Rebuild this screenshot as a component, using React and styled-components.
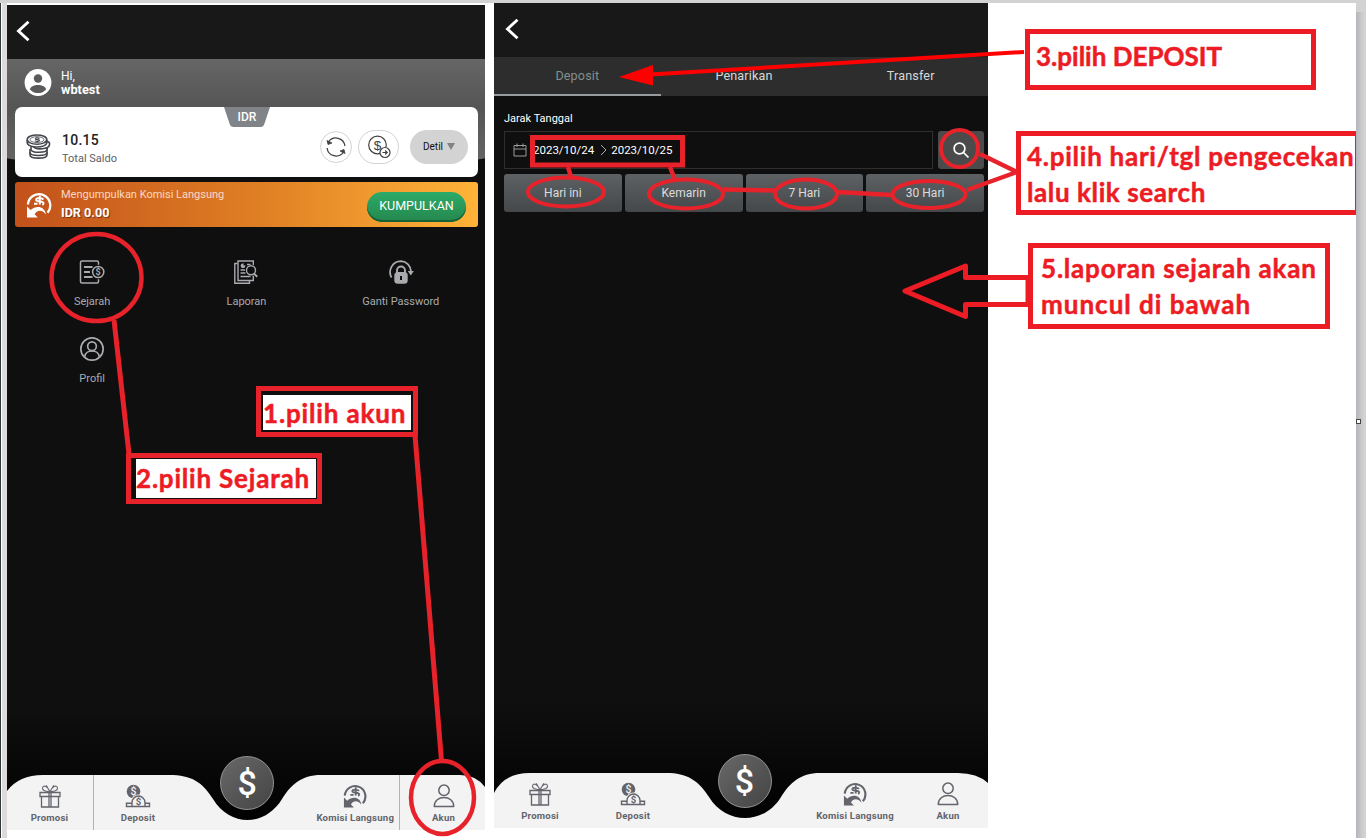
import React from "react";
import styled, { createGlobalStyle } from "styled-components";

const RED = "#ed1c24";

const Global = createGlobalStyle`
  * { box-sizing: border-box; }
  html, body { margin: 0; padding: 0; background: #fff; }
  body { font-family: Roboto, "Liberation Sans", sans-serif; overflow: hidden; }
`;

const Page = styled.main`
  position: relative;
  width: 1366px;
  height: 838px;
  display: flex;
  align-items: flex-start;
  background: #fff;
  border-top: 3px solid #d2d2d2;
  overflow: hidden;
`;
const LeftEdge = styled.div`
  width: 7px;
  height: 100%;
  flex: none;
  background: #dedadb;
  border-left: 1px solid #33383d;
  box-shadow: inset 1px 0 0 #fff;
`;
const Phone = styled.section`
  position: relative;
  flex: none;
  display: flex;
  flex-direction: column;
  width: ${(p) => p.$w}px;
  height: 825px;
  margin-top: ${(p) => p.$top}px;
  margin-left: ${(p) => p.$left || 0}px;
  background: linear-gradient(#0f0f0f 0 85%, #000 100%);
  overflow: hidden;
`;
const Header = styled.header`
  height: 54px;
  flex: none;
  display: flex;
  align-items: center;
  padding: 0 0 2px ${(p) => p.$pl}px;
  background: #181818;
`;
const Hero = styled.div`
  position: relative;
  height: 123px;
  padding: 0 7px 0 8px;
  isolation: isolate;
  &::before {
    content: "";
    position: absolute;
    z-index: -1;
    inset: 0 -2px 16px -2px;
    background: linear-gradient(#666, #555 45%, #666);
    border-radius: 0 0 50% 50% / 0 0 9px 9px;
  }
`;
const User = styled.div`
  height: 48px;
  display: flex;
  align-items: center;
  gap: 9px;
  padding-left: 9px;
  color: #fff;
  font-size: 12px;
  line-height: 13.5px;
  b { display: block; font-weight: 700; font-size: 12.8px; }
`;
const Balance = styled.div`
  position: relative;
  height: 70px;
  display: flex;
  align-items: center;
  padding: 9px 10px 0 11px;
  border-radius: 7px;
  background: #fff;
`;
const Currency = styled.span`
  position: absolute;
  left: 209px;
  top: 0;
  width: 46px;
  height: 20px;
  text-align: center;
  font-size: 12px;
  line-height: 20px;
  font-weight: 500;
  color: #fff;
  isolation: isolate;
  svg { position: absolute; inset: 0; z-index: -1; }
`;
const Amount = styled.div`
  flex: 1;
  margin-left: 11px;
  padding-top: 5px;
  font-size: 11px;
  line-height: 17px;
  color: #5c6065;
  b { display: block; font-size: 14px; line-height: 19px; font-weight: 500; color: #222; letter-spacing: 0.25px; }
`;
const RoundButton = styled.button`
  display: grid;
  place-items: center;
  width: ${(p) => p.$w}px;
  height: ${(p) => p.$h}px;
  margin-left: ${(p) => p.$ml}px;
  padding: 0;
  border: 1px solid #d3d3d3;
  border-radius: 20px;
  background: #fff;
`;
const DetailButton = styled.button`
  display: flex;
  align-items: center;
  justify-content: center;
  gap: 4px;
  width: 58px;
  height: 34px;
  margin-left: 11px;
  padding: 0;
  border: 0;
  border-radius: 17px;
  background: #d3d3d3;
  color: #111;
  font: 10px Roboto, sans-serif;
`;
const Commission = styled.div`
  display: flex;
  align-items: center;
  height: 45px;
  margin: 0 7px 0 8px;
  padding: 0 12px 0 11px;
  border-radius: 3px;
  background: linear-gradient(90deg, #c2511b, #df7e24 52%, #ffb338);
  color: #fff;
`;
const CommissionText = styled.div`
  flex: 1;
  margin-left: 9px;
  font-size: 11px;
  line-height: 16px;
  color: #fbd9c4;
  b { display: block; font-size: 12.6px; line-height: 20px; color: #fff; text-shadow: 1px 1px 1px rgba(60, 20, 0, 0.6); }
`;
const Collect = styled.button`
  width: 99px;
  height: 30px;
  margin-top: 4px;
  padding: 0 0 3px;
  border: 0;
  border-radius: 15px;
  background: linear-gradient(#2cab68, #25874e);
  box-shadow: inset 0 -2px 0 #146336;
  color: #fff;
  font: 12.5px Roboto, sans-serif;
`;
const Menu = styled.div`
  display: grid;
  grid-template-columns: repeat(3, 154.3px);
  grid-auto-rows: 77px;
  margin: 33px 7px 0 8px;
`;
const MenuItem = styled.div`
  display: flex;
  flex-direction: column;
  align-items: center;
  gap: 11px;
  color: #a9abaf;
  font-size: 11px;
  line-height: 14px;
`;

const Tabs = styled.nav`
  display: grid;
  grid-template-columns: repeat(3, 166.7px);
  height: 39px;
  background: #2d2d2d;
`;
const Tab = styled.div`
  display: flex;
  align-items: center;
  justify-content: center;
  border-bottom: 2px solid ${(p) => (p.$active ? "#989b9e" : "transparent")};
  color: ${(p) => (p.$active ? "#82908d" : "#d8d8d8")};
  font-size: 12.6px;
  letter-spacing: 0.15px;
`;
const Filters = styled.div`
  padding: 15px 4px 0 10px;
`;
const FieldLabel = styled.div`
  color: #fff;
  font-size: 11px;
  line-height: 15px;
  margin-bottom: 5px;
`;
const FilterRow = styled.div`
  display: flex;
  gap: 5px;
  margin-bottom: 5px;
`;
const DateField = styled.div`
  display: flex;
  align-items: center;
  width: 429px;
  height: 38px;
  padding-left: 8px;
  border: 1px solid #2f2f2f;
  color: #fff;
  font-size: 11.5px;
  svg { flex: none; }
`;
const DateText = styled.span`
  margin-left: ${(p) => p.$ml}px;
`;
const Chevron = styled.svg`
  margin-left: 6px;
`;
const SearchButton = styled.button`
  display: grid;
  place-items: center;
  width: 46px;
  height: 38px;
  padding: 0;
  border: 0;
  border-radius: 3px;
  background: #4b4b4b;
`;
const Ranges = styled.div`
  display: grid;
  grid-template-columns: repeat(4, 1fr);
  gap: 3px;
`;
const Range = styled.button`
  height: 38px;
  padding: 0 0 1px;
  border: 0;
  border-radius: 3px;
  background: linear-gradient(#5e6164, #45484a);
  color: #dcdcdc;
  font: 12px Roboto, sans-serif;
`;

const NavBar = styled.nav`
  position: absolute;
  left: 0;
  bottom: 0;
  width: 100%;
  height: 75px;
  > svg { position: absolute; left: 0; bottom: 0; }
`;
const NavGrid = styled.div`
  position: relative;
  display: grid;
  grid-template-columns: ${(p) => p.$cols};
  margin-left: ${(p) => p.$shift}px;
  padding-top: 20px;
`;
const NavItem = styled.div`
  display: flex;
  flex-direction: column;
  align-items: center;
  gap: 3px;
  height: 55px;
  padding-top: 9px;
  border-left: ${(p) => (p.$bl ? "1px solid #b3b3b5" : "0")};
  border-right: ${(p) => (p.$br ? "1px solid #b3b3b5" : "0")};
  color: #63646c;
  font-size: 9.6px;
  font-weight: 700;
  line-height: 14px;
  letter-spacing: 0.22px;
  white-space: nowrap;
`;
const Coin = styled.div`
  justify-self: center;
  width: 54px;
  height: 54px;
  margin: -19px 0 20px 1px;
  display: grid;
  place-items: center;
  border: 1.5px solid #949494;
  border-radius: 50%;
  background: linear-gradient(135deg, #686868, #444);
  color: #fff;
  font-size: 34px;
  font-weight: 500;
  line-height: 51px;
`;

const Notes = styled.aside`
  display: flex;
  flex-direction: column;
  width: 368px;
  flex: none;
  padding-top: 26px;
`;
const Note = styled.div`
  width: ${(p) => p.$w}px;
  height: ${(p) => p.$h}px;
  margin: ${(p) => p.$m};
  padding: ${(p) => p.$pad};
  border: 5px solid ${RED};
  ${(p) => p.$thinRight && "border-right-width: 2px;"}
  background: #fff;
  color: ${RED};
  font: 700 26px/36px Lato, sans-serif;
  -webkit-text-stroke: 0.5px ${RED};
  white-space: nowrap;
`;
const NoteLine = styled.div`
  letter-spacing: ${(p) => p.$ls || 0}px;
`;
const Gutter = styled.div`
  position: absolute;
  right: 0;
  top: 0;
  width: 10px;
  height: 100%;
  background: #d2d2d2;
  &::before {
    content: "";
    position: absolute;
    inset: 9px 2px 0 0;
    background: linear-gradient(90deg, #b3b6bc, #d2d2d2);
  }
`;
const Handle = styled.div`
  position: absolute;
  left: 1356px;
  top: 416px;
  width: 5px;
  height: 5px;
  border: 1px solid #444;
  background: #fff;
`;
const Marks = styled.svg`
  position: absolute;
  left: 0;
  top: -3px;
`;
const Callout = styled.div`
  position: absolute;
  left: ${(p) => p.$x}px;
  top: ${(p) => p.$y - 3}px;
  width: ${(p) => p.$w}px;
  height: ${(p) => p.$h}px;
  padding: ${(p) => p.$pad};
  border: 5px solid #e8222a;
  background: #0f0f0f;
  color: ${RED};
  font: 700 26px/36px Lato, sans-serif;
  -webkit-text-stroke: 0.5px ${RED};
  white-space: nowrap;
  > div { height: 100%; padding-bottom: ${(p) => p.$lift || 0}px; display: flex; align-items: center; background: #fff; letter-spacing: ${(p) => p.$ls}px; }
`;

const Back = () => (
  <svg width="16" height="22" viewBox="0 0 16 22" fill="none" stroke="#fff" strokeWidth="2.9">
    <path d="M13.5 1.8 3.5 11l10 9.2" />
  </svg>
);
const Avatar = () => (
  <svg width="28" height="28" viewBox="0 0 28 28">
    <circle cx="14" cy="13.500" r="13.400" fill="#fff" />
    <circle cx="14" cy="9.500" r="4.200" fill="#5b5b5b" />
    <path d="M5.800 20.200c1-3.100 5-4.200 8.200-4.200s7.200 1.100 8.200 4.200C20 22.800 17 24.100 14 24.100S8 22.800 5.800 20.200z" fill="#5b5b5b" />
  </svg>
);
const Coins = () => (
  <svg width="25" height="26" viewBox="0 0 25 26" fill="#fff" stroke="#44474c" strokeWidth="1.600">
    <path d="M4 18v3c0 4.200 17 4.200 17 0v-3" />
    <path d="M4 15v3.500c0 4 17 4 17 0V14" />
    <path d="M5 11v4.500c0 4 16 3.500 16 0V13" />
    <path d="M7 12c2 4.500 16.500 3.500 16.500-1.500V9c-1-3-16-3-16.500 1z" />
    <path d="M1.200 6v2.500c0 6 19.600 6 19.600 0V6" />
    <ellipse cx="11" cy="5.600" rx="9.800" ry="4.600" />
    <ellipse cx="11" cy="5.600" rx="7" ry="2.900" strokeWidth=".8" />
    <path d="M13.500 4.500c-1.500-1-4.500-.7-4 .4.500 1 4 .5 4 1.700 0 1-3.500 1.200-4.500.1" strokeWidth="1.200" fill="none" />
  </svg>
);
const Refresh = () => (
  <svg width="20" height="20" viewBox="0 0 20 20" fill="none" stroke="#44403d" strokeWidth="1.300">
    <path d="M2.500 5A9 9 0 0 1 18.900 9M17.500 15A9 9 0 0 1 1.100 11" />
    <path d="M1 3.500 2 7.500 6 6zM19 16.500l-1-4-4 1.500z" fill="#44403d" stroke="#44403d" strokeWidth=".8" />
  </svg>
);
const Send = () => (
  <svg width="24" height="24" viewBox="0 0 24 24" fill="none" stroke="#44403d" strokeWidth="1.200">
    <circle cx="10.500" cy="10" r="8.800" />
    <text x="10.500" y="14.800" textAnchor="middle" fontSize="13.500" fill="#44403d" stroke="none">$</text>
    <circle cx="18" cy="17.500" r="5" fill="#fff" />
    <path d="M15.500 17.500h4.500m-1.800-2 2 2-2 2" />
  </svg>
);
const Cashback = ({ size = 26, color = "#fff" }) => (
  <svg width={size} height={size} viewBox="0 0 26 26" fill="none" stroke={color} strokeWidth="2.300">
    <path d="M1.900 12.500A11.200 11.200 0 1 1 21.500 20.800" />
    <path d="M1 14.500V25.500H11.800L8.600 22.200C11 18.300 15.500 17 20 22.500C18.800 14.300 10.500 12.800 4.600 18.100Z" fill={color} stroke="none" />
    <path d="M17.300 7.600c-1.300-2-7-2.200-7.200.2-.2 2.500 7.400.8 7.400 3.400 0 .8-.5 1.300-1.200 1.600M8 11.800h3.500M13.800 3.600V12.500" strokeWidth="2" />
  </svg>
);
const History = () => (
  <svg width="26" height="24" viewBox="0 0 26 24" fill="none" stroke="currentColor" strokeWidth="1.500">
    <path d="M19.500 4.800V2.500Q19.500 1 18 1H3Q1.500 1 1.500 2.500v19Q1.500 23 3 23h15q1.500 0 1.500-1.500v-2.300" />
    <path d="M5 7h8.500M5 12h6M5 17h8.500" strokeWidth="1.800" />
    <circle cx="19.200" cy="12" r="5.600" />
    <text x="19.200" y="15.300" textAnchor="middle" fontSize="9" fontWeight="700" fill="currentColor" stroke="none">$</text>
  </svg>
);
const Report = () => (
  <svg width="24" height="24" viewBox="0 0 24 24" fill="none" stroke="currentColor" strokeWidth="1.400">
    <path d="M19.300 5V1H4v19.500h15.300v-4.800" />
    <path d="M3.500 3.500H.8V23.200H15.500v-2.500" />
    <circle cx="9" cy="5.800" r="2.400" fill="currentColor" stroke="none" />
    <path d="M9.600 5.200 12 3" stroke="#0f0f0f" />
    <path d="M6.500 10h4.500M6.500 13h5M6.500 16.500h10M13 4.500h3.500" />
    <circle cx="17" cy="10.300" r="4.500" />
    <path d="m20.200 13.800 3 3" strokeWidth="2" />
  </svg>
);
const Password = () => (
  <svg width="26" height="24" viewBox="0 0 26 24" fill="none" stroke="currentColor" strokeWidth="1.800">
    <path d="M3.500 17.500A11 11 0 0 1 13 1.200A10.500 10.500 0 0 1 23 11.500" />
    <path d="M19.800 11h6l-3 4.500z" fill="currentColor" stroke="none" />
    <path d="M9 13V10.500a4 4 0 0 1 8 0V13" strokeWidth="1.900" />
    <rect x="6.300" y="12" width="13.400" height="11.800" rx="3.500" fill="currentColor" stroke="none" />
    <path d="M13 16v4" stroke="#0f0f0f" strokeWidth="2" />
  </svg>
);
const Profile = () => (
  <svg width="26" height="24" viewBox="0 0 26 26" fill="none" stroke="currentColor" strokeWidth="1.800">
    <circle cx="13" cy="13" r="12.100" />
    <circle cx="13" cy="10" r="4.700" />
    <path d="M5 21.500c1-8.500 15-8.500 16 0" />
  </svg>
);
const Gift = () => (
  <svg width="24" height="24" viewBox="0 0 24 24" fill="none" stroke="currentColor" strokeWidth="1.300">
    <path d="M2 8.500h20v4H2zM3.500 12.500V23h17V12.500M11 8.500V23M13 8.500V23" />
    <path d="M12 8C9 1 5 1 4.500 4S9 7.500 12 8c3-7 7-7 7.500-4S15 7.500 12 8zM12 8C9 3 9 1.500 8 1.500M12 8c3-5 3-6.500 4-6.500" strokeWidth="1.100" />
  </svg>
);
const DepositIcon = () => (
  <svg width="26" height="24" viewBox="0 0 26 24" fill="none" stroke="currentColor" strokeWidth="1.400">
    <circle cx="8.500" cy="7.500" r="6.800" fill="currentColor" stroke="none" />
    <text x="8.500" y="11.200" textAnchor="middle" fontSize="10.500" fontWeight="500" fill="#f3f3f3" stroke="none">$</text>
    <path d="M7 22.500v-4a6.500 6.500 0 0 1 13 0v4z" fill="#f3f3f3" stroke="#f3f3f3" strokeWidth="3" />
    <path d="M7 19.200H1.500v3.300h23v-3.300H20" />
    <path d="M7 22.500v-4a6.500 6.500 0 0 1 13 0v4" />
    <text x="13.500" y="21" textAnchor="middle" fontSize="9.500" fill="currentColor" stroke="none">$</text>
  </svg>
);
const Account = () => (
  <svg width="22" height="24" viewBox="0 0 22 24" fill="none" stroke="currentColor" strokeWidth="1.500">
    <circle cx="11" cy="6.300" r="5.200" />
    <path d="M1.300 22.500c-.3-12 19.700-12 19.400 0z" strokeLinejoin="round" />
  </svg>
);
const Calendar = () => (
  <svg width="14" height="14" viewBox="0 0 14 14" fill="none" stroke="#9b9b9b" strokeWidth="1">
    <path d="M1 2.500h12v10.500H1zM1 6h12M4 .5v3.500M10 .5v3.500" />
  </svg>
);
const Search = () => (
  <svg width="18" height="18" viewBox="0 0 18 18" fill="none" stroke="#fff" strokeWidth="1.700">
    <circle cx="7.500" cy="7.500" r="5.400" />
    <path d="m11.500 11.500 5 5" />
  </svg>
);

function BottomNav({ shape, width, cols, shift, dividers }) {
  return (
    <NavBar>
      <svg width={width} height="75" viewBox={`0 0 ${width} 75`}>
        <path d={shape} fill="#f3f3f3" />
      </svg>
      <NavGrid $cols={cols} $shift={shift}>
        <NavItem $br={dividers}><Gift />Promosi</NavItem>
        <NavItem><DepositIcon />Deposit</NavItem>
        <Coin>$</Coin>
        <NavItem><Cashback size={24} color="#63646c" />Komisi Langsung</NavItem>
        <NavItem $bl={dividers}><Account />Akun</NavItem>
      </NavGrid>
    </NavBar>
  );
}

export default function App() {
  return (
    <>
      <Global />
      <Page>
        <LeftEdge />
        <Phone $w={478} $top={2}>
          <Header $pl={8}><Back /></Header>
          <Hero>
            <User>
              <Avatar />
              <div>Hi,<b>wbtest</b></div>
            </User>
            <Balance>
              <Currency>
                <svg width="46" height="20"><path d="M0 0h46l-5.500 16.500q-1 3.500-4 3.500H9.500q-3 0-4-3.500z" fill="#808489" /></svg>
                IDR
              </Currency>
              <Coins />
              <Amount><b>10.15</b>Total Saldo</Amount>
              <RoundButton $w={32} $h={32} $ml={0}><Refresh /></RoundButton>
              <RoundButton $w={41} $h={34} $ml={6}><Send /></RoundButton>
              <DetailButton>
                Detil
                <svg width="8" height="7"><path d="M0 0h8L4 7z" fill="#828282" /></svg>
              </DetailButton>
            </Balance>
          </Hero>
          <Commission>
            <Cashback />
            <CommissionText>Mengumpulkan Komisi Langsung<b>IDR 0.00</b></CommissionText>
            <Collect>KUMPULKAN</Collect>
          </Commission>
          <Menu>
            <MenuItem><History />Sejarah</MenuItem>
            <MenuItem><Report />Laporan</MenuItem>
            <MenuItem><Password />Ganti Password</MenuItem>
            <MenuItem><Profile />Profil</MenuItem>
          </Menu>
          <BottomNav
            width={478}
            shape="M0 36Q12 20 36 20H166C188 21 197 30 206 44C223 72 258 72 275 44C284 30 294 20 314 20H453Q469 20 478 32V75H0Z"
            cols="88px 88px 129.500px 87.500px 88px"
            shift={-1}
            dividers
          />
        </Phone>
        <Phone $w={494} $top={0} $left={9}>
          <Header $pl={10}><Back /></Header>
          <Tabs>
            <Tab $active>Deposit</Tab>
            <Tab>Penarikan</Tab>
            <Tab>Transfer</Tab>
          </Tabs>
          <Filters>
            <FieldLabel>Jarak Tanggal</FieldLabel>
            <FilterRow>
              <DateField>
                <Calendar />
                <DateText $ml={6}>2023/10/24</DateText>
                <Chevron width="7" height="12" fill="none" stroke="#aaa"><path d="m1 1 5 5-5 5" /></Chevron>
                <DateText $ml={4}>2023/10/25</DateText>
              </DateField>
              <SearchButton><Search /></SearchButton>
            </FilterRow>
            <Ranges>
              <Range>Hari ini</Range>
              <Range>Kemarin</Range>
              <Range>7 Hari</Range>
              <Range>30 Hari</Range>
            </Ranges>
          </Filters>
          <BottomNav
            width={494}
            shape="M0 40Q10 20 36 20H176C196 21 206 30 215 44C232 72 270 72 287 44C296 30 306 20 326 20H464Q483 20 494 30V75H0Z"
            cols="93px 93px 129px 93px 93px"
            shift={-0.5}
          />
        </Phone>
        <Notes>
          <Note $w={291} $h={61} $m="0 0 0 37px" $pad="4px 6px"><NoteLine>3.pilih DEPOSIT</NoteLine></Note>
          <Note $w={341} $h={84} $m="41px 0 0 28px" $pad="2px 6px" $thinRight>
            <NoteLine $ls={0.74}>4.pilih hari/tgl pengecekan</NoteLine>
            <NoteLine $ls={0.6}>lalu klik search</NoteLine>
          </Note>
          <Note $w={302} $h={86} $m="28px 0 0 40px" $pad="2px 8px">
            <NoteLine $ls={0.8}>5.laporan sejarah akan</NoteLine>
            <NoteLine $ls={1.0}>muncul di bawah</NoteLine>
          </Note>
        </Notes>
        <Gutter />
        <Handle />
        <Callout $x={256} $y={386} $w={162} $h={51} $pad="4px 2px 2px 2px" $ls={0.85}><div>1.pilih akun</div></Callout>
        <Callout $x={126} $y={453} $w={196} $h={51} $pad="1px 1px 1px 5px" $ls={0.8} $lift={2}><div>2.pilih Sejarah</div></Callout>
        <Marks width="1366" height="838" fill="none" stroke="#e8222a" strokeWidth="5">
          <ellipse cx="96.500" cy="277.500" rx="45" ry="43.500" strokeWidth="4.500" />
          <path d="M114 320 129 454M415 435 441.500 761" />
          <ellipse cx="442.500" cy="797.500" rx="31.500" ry="36.500" strokeWidth="4.500" />
          <rect x="532.500" y="137.500" width="150" height="27.500" />
          <path d="M568 167 571 177M670 167 675 180M723 189.500 776 190.500M837 192 892 195M980 154 1017 172 967 190" strokeWidth="4.500" strokeLinejoin="bevel" />
          <g strokeWidth="4">
            <ellipse cx="566" cy="192" rx="38" ry="14.500" />
            <ellipse cx="686" cy="194" rx="37" ry="14.500" />
            <ellipse cx="806" cy="194" rx="31" ry="14.500" />
            <ellipse cx="929" cy="194.500" rx="36.500" ry="13.500" />
            <circle cx="959.500" cy="148.500" r="18.500" />
          </g>
          <path d="M1024 52 650 74.500" stroke="#f00" strokeWidth="4" />
          <path d="M619 77 653 65V85.500z" fill="#f00" stroke="none" />
          <path d="M1028 277.500H965.500V266L905 291 965.500 316.500V304.500H1028z" stroke={RED} strokeLinejoin="round" />
        </Marks>
      </Page>
    </>
  );
}
